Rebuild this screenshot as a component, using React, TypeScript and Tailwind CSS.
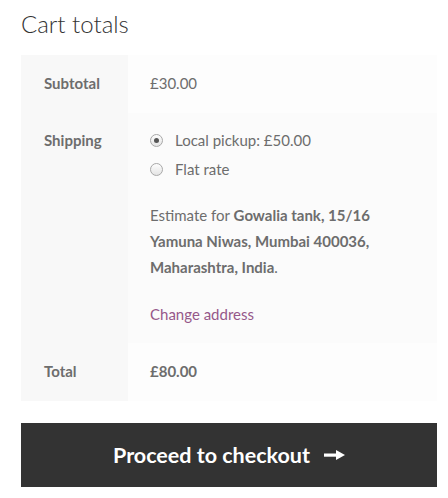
import React from 'react'

function Radio({ checked }: { checked?: boolean }) {
  return (
    <span className="relative inline-flex h-[13px] w-[13px] shrink-0 items-center justify-center rounded-full border border-[#a8a8a8] bg-gradient-to-b from-[#fdfdfd] to-[#e4e4e4]">
      {checked && <span className="h-[5px] w-[5px] rounded-full bg-[#555]" />}
    </span>
  )
}

export default function App() {
  return (
    <div className="min-h-screen bg-white px-[21px] pt-[5px] text-[15px] leading-[26px] text-[#6d6d6d] [font-family:Lato,'Liberation_Sans',sans-serif]">
      <h2 className="mb-[12px] text-[24px] font-light leading-[38px] text-[#333]">Cart totals</h2>

      <div className="w-[416px]">
        <div className="flex">
          <div className="w-[107px] shrink-0 bg-[#f8f8f8] px-[23px] pt-[15px] pb-[17px] font-bold">Subtotal</div>
          <div className="flex-1 bg-[#fdfdfd] px-[22px] pt-[15px] pb-[17px]">£30.00</div>
        </div>

        <div className="flex">
          <div className="w-[107px] shrink-0 bg-[#f8f8f8] px-[23px] pt-[14px] pb-[16px] font-bold">Shipping</div>
          <div className="flex-1 bg-[#fbfbfb] px-[22px] pt-[14px] pb-[16px]">
            <ul className="mb-[20px]">
              <li className="mb-[3px] flex items-center gap-[12px]">
                <Radio checked />
                <span>Local pickup: £50.00</span>
              </li>
              <li className="mb-[3px] flex items-center gap-[12px]">
                <Radio />
                <span>Flat rate</span>
              </li>
            </ul>
            <p className="mb-[21px]">
              Estimate for <strong>Gowalia tank, 15/16 Yamuna Niwas, Mumbai 400036, Maharashtra, India</strong>.
            </p>
            <a className="text-[#96588a]">Change address</a>
          </div>
        </div>

        <div className="flex">
          <div className="w-[107px] shrink-0 bg-[#f8f8f8] px-[23px] pt-[15px] pb-[17px] font-bold">Total</div>
          <div className="flex-1 bg-[#fdfdfd] px-[22px] pt-[15px] pb-[17px] font-bold">£80.00</div>
        </div>
      </div>

      <button className="mt-[22px] flex h-[64px] w-[416px] items-center justify-center gap-[14px] bg-[#333333] text-[21.5px] font-bold text-white">
        <span>Proceed to checkout</span>
        <svg width="21" height="10" viewBox="0 0 21 10" fill="white">
          <rect x="0" y="3.5" width="14" height="3.2" />
          <path d="M12 0 L21 5 L12 10 Z" />
        </svg>
      </button>
    </div>
  )
}
